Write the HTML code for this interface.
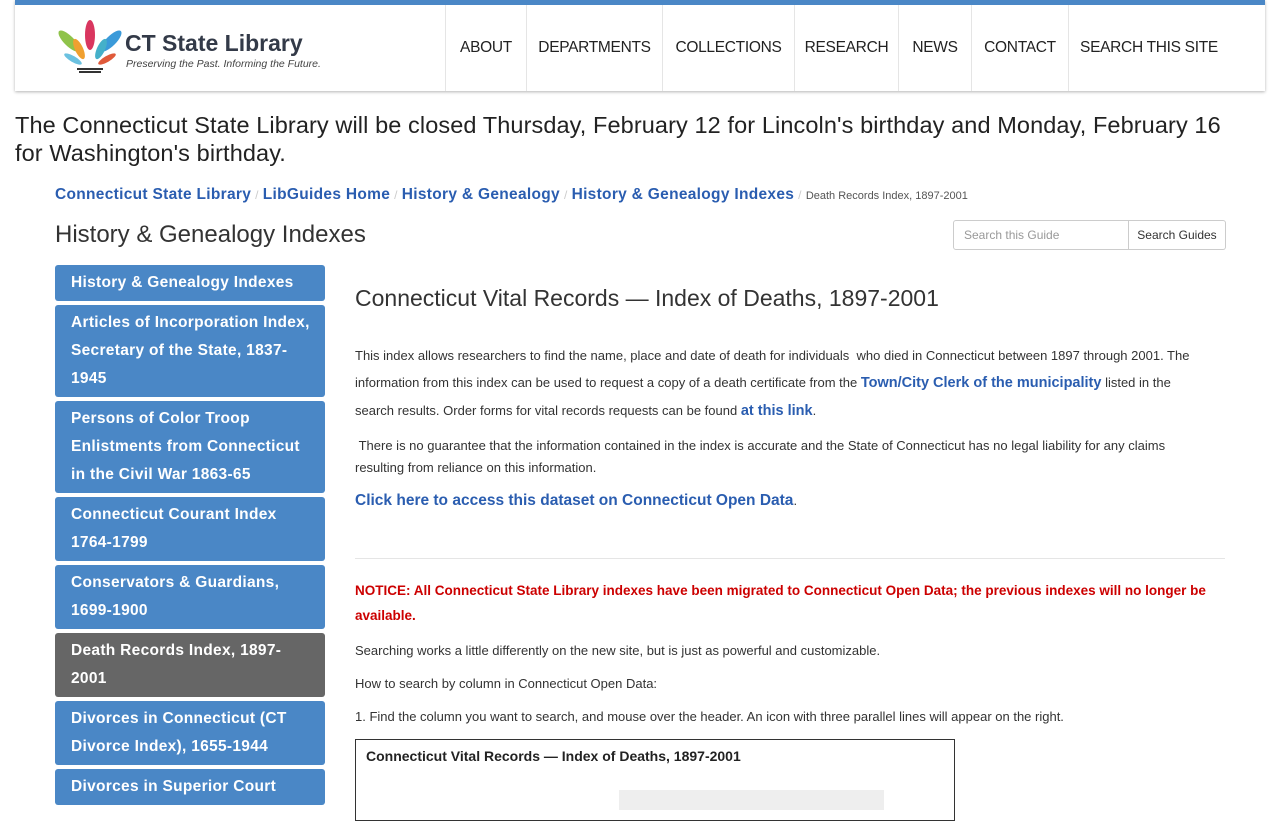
<!DOCTYPE html>
<html><head><meta charset="utf-8"><style>
body{margin:0;background:#fff;font-family:"Liberation Sans",sans-serif;color:#333;width:1280px;height:800px;overflow:hidden;position:relative}
.hdr{position:absolute;left:15px;top:0;width:1250px;height:86px;border-top:5px solid #4a87c6;box-shadow:0 1px 3px rgba(0,0,0,.3);background:#fff}
.nav{position:absolute;left:430px;top:0;height:86px;display:flex;border-left:1px solid #e5e5e5}
.nav div{line-height:86px;font-size:15.5px;color:#222;border-right:1px solid #e5e5e5;text-align:center;letter-spacing:-.3px}
.nav div:last-child{border-right:none}
.alert{position:absolute;left:15px;top:111px;font-size:23.5px;line-height:28px;color:#222;width:1235px;letter-spacing:.1px}
.bc{position:absolute;left:55px;top:186px;font-size:15.5px;font-weight:bold;color:#2a5db0;letter-spacing:.3px}
.bc span.s{color:#ccc;font-weight:normal;margin:0 4px;font-size:12px}
.bc small{color:#555;font-weight:normal;font-size:11px;letter-spacing:0}
h1{position:absolute;left:55px;top:221px;margin:0;font-size:24px;font-weight:normal;color:#333}
.srch{position:absolute;left:953px;top:220px;display:flex}
.srch .i{width:164px;height:28px;border:1px solid #ccc;border-radius:3px 0 0 3px;font-size:12px;color:#999;line-height:28px;padding-left:10px}
.srch .b{width:96px;height:28px;border:1px solid #ccc;border-left:none;border-radius:0 3px 3px 0;font-size:12px;line-height:28px;text-align:center;color:#333}
.side{position:absolute;left:55px;top:265px;width:270px}
.side div{background:#4a87c6;color:#fff;font-weight:bold;font-size:15.5px;line-height:28px;padding:4px 0 4px 16px;margin-bottom:4px;border-radius:3px;letter-spacing:.3px;white-space:nowrap;overflow:hidden}
.side div.a{background:#666}
.main{position:absolute;left:355px;top:280px;width:880px;font-size:13px;line-height:27px}
.main h2{font-size:23px;font-weight:normal;margin:5px 0 30px;color:#333}
.main p{margin:0 0 6px}
a{color:#2a5db0;font-weight:bold;text-decoration:none;font-size:14.5px}
.red{color:#c00;font-weight:bold;font-size:13.5px;line-height:25px;width:870px}
.box{position:absolute;left:355px;top:739px;width:598px;height:80px;border:1px solid #333}
.box b{position:absolute;left:10px;top:8px;font-size:14px;color:#222}
.box i{position:absolute;left:263px;top:50px;width:265px;height:20px;background:#eee}
</style></head><body>
<div class="hdr">
<svg style="position:absolute;left:40px;top:12px" width="72" height="58" viewBox="0 0 72 58">
<ellipse cx="35" cy="18" rx="5" ry="15" fill="#d9365f"/>
<ellipse cx="14" cy="24" rx="5" ry="14" fill="#8fc34a" transform="rotate(-45 14 24)"/>
<ellipse cx="56" cy="24" rx="5" ry="14" fill="#3b9ad9" transform="rotate(45 56 24)"/>
<ellipse cx="24" cy="32" rx="4" ry="11" fill="#f0a030" transform="rotate(-25 24 32)"/>
<ellipse cx="46" cy="32" rx="4" ry="11" fill="#45b0c9" transform="rotate(25 46 32)"/>
<ellipse cx="18" cy="42" rx="3" ry="10" fill="#6bc1e0" transform="rotate(-60 18 42)"/>
<ellipse cx="52" cy="42" rx="3" ry="10" fill="#e05a3a" transform="rotate(60 52 42)"/>
<path d="M22 52h26M24 55h22" stroke="#333" stroke-width="2"/></svg>
<div style="position:absolute;left:110px;top:25px;font-weight:bold;font-size:23px;color:#333a48">CT State Library</div>
<div style="position:absolute;left:111px;top:53px;font-style:italic;font-size:10.5px;color:#444">Preserving the Past. Informing the Future.</div>
<div class="nav"><div style="width:80px">ABOUT</div><div style="width:135px">DEPARTMENTS</div><div style="width:131px">COLLECTIONS</div><div style="width:103px">RESEARCH</div><div style="width:72px">NEWS</div><div style="width:96px">CONTACT</div><div style="width:160px">SEARCH THIS SITE</div></div>
</div>
<div class="alert">The Connecticut State Library will be closed Thursday, February 12 for Lincoln's birthday and Monday, February 16 for Washington's birthday.</div>
<div class="bc">Connecticut State Library<span class="s">/</span>LibGuides Home<span class="s">/</span>History &amp; Genealogy<span class="s">/</span>History &amp; Genealogy Indexes<span class="s">/</span><small>Death Records Index, 1897-2001</small></div>
<h1>History &amp; Genealogy Indexes</h1>
<div class="srch"><div class="i">Search this Guide</div><div class="b">Search Guides</div></div>
<div class="side">
<div>History &amp; Genealogy Indexes</div>
<div>Articles of Incorporation Index,<br>Secretary of the State, 1837-<br>1945</div>
<div>Persons of Color Troop<br>Enlistments from Connecticut<br>in the Civil War 1863-65</div>
<div>Connecticut Courant Index<br>1764-1799</div>
<div>Conservators &amp; Guardians,<br>1699-1900</div>
<div class="a">Death Records Index, 1897-<br>2001</div>
<div>Divorces in Connecticut (CT<br>Divorce Index), 1655-1944</div>
<div>Divorces in Superior Court</div>
</div>
<div class="main">
<h2>Connecticut Vital Records — Index of Deaths, 1897-2001</h2>
<p>This index allows researchers to find the name, place and date of death for individuals &nbsp;who died in Connecticut between 1897 through 2001. The<br>information from this index can be used to request a copy of a death certificate from the <a>Town/City Clerk of the municipality</a> listed in the<br>search results. Order forms for vital records requests can be found <a>at this link</a>.</p>
<p style="line-height:22px;margin-top:10px;width:860px">&nbsp;There is no guarantee that the information contained in the index is accurate and the State of Connecticut has no legal liability for any claims resulting from reliance on this information.</p>
<p style="margin-top:8px"><a style="font-size:15.5px">Click here to access this dataset on Connecticut Open Data</a>.</p>
<hr style="border:none;border-top:1px solid #e5e5e5;margin:44px 0 19px;width:870px">
<p class="red">NOTICE: All Connecticut State Library indexes have been migrated to Connecticut Open Data; the previous indexes will no longer be available.</p>
<p style="margin-top:2px;line-height:33px;margin-bottom:0">Searching works a little differently on the new site, but is just as powerful and customizable.</p>
<p style="line-height:33px;margin:0">How to search by column in Connecticut Open Data:</p>
<p style="line-height:33px;margin:0">1. Find the column you want to search, and mouse over the header. An icon with three parallel lines will appear on the right.</p>
</div>
<div class="box"><b>Connecticut Vital Records — Index of Deaths, 1897-2001</b><i></i></div>
</body></html>
